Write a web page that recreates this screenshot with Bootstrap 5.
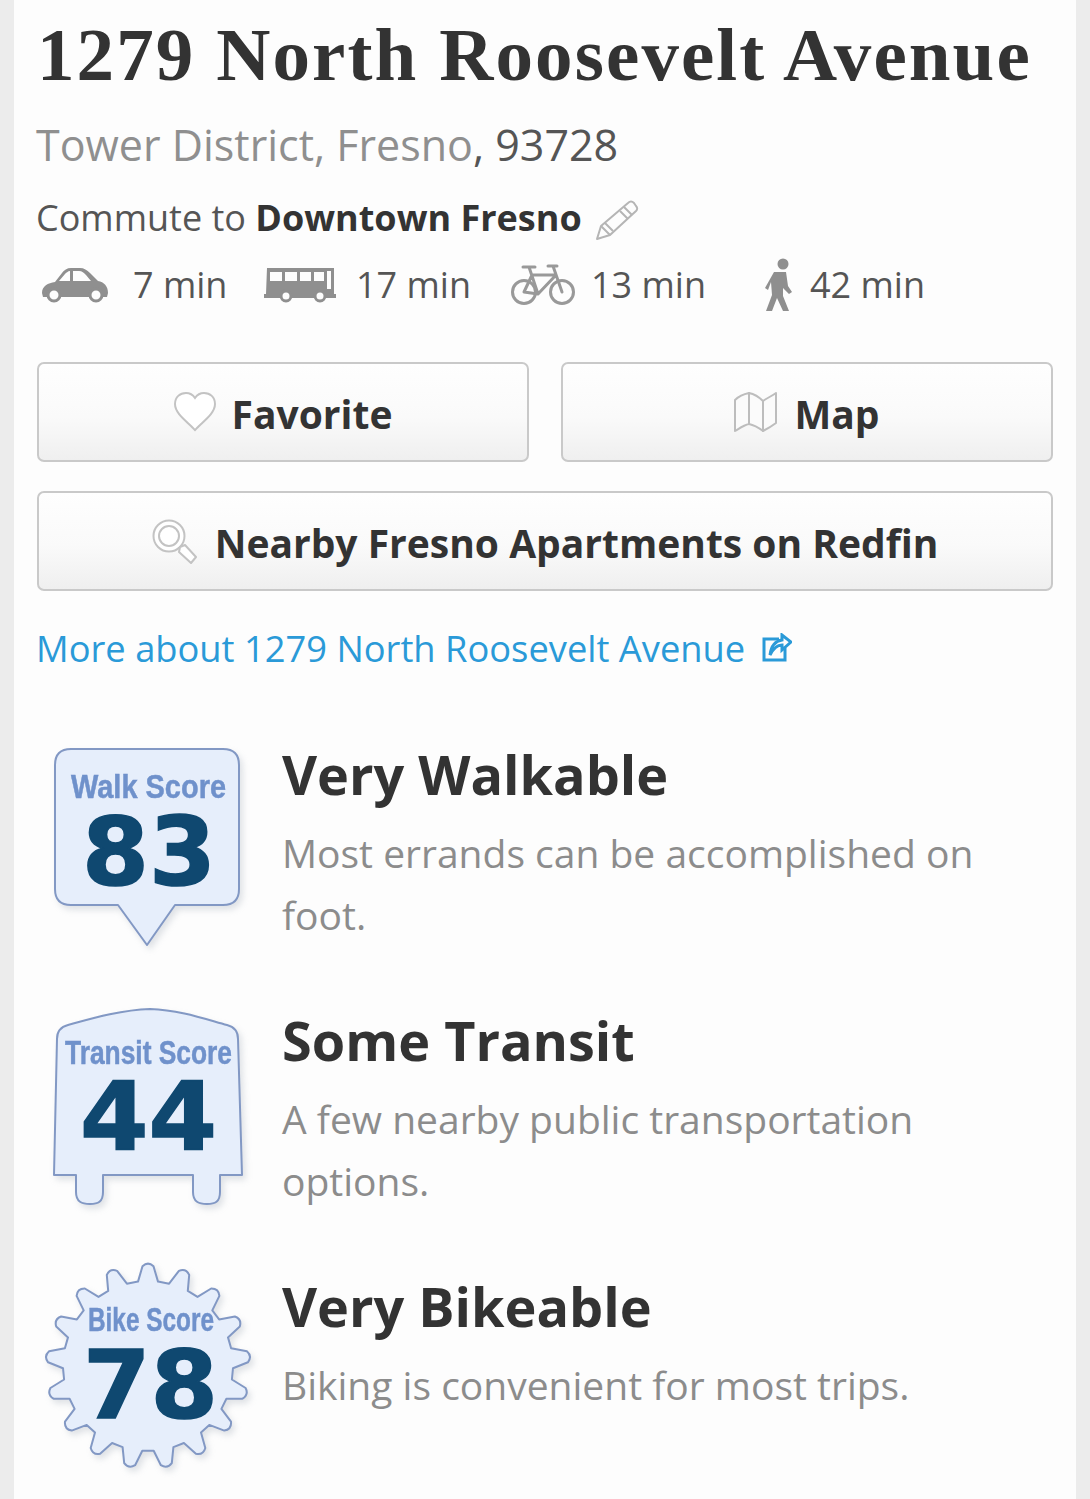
<!DOCTYPE html>
<html lang="en">
<head>
<meta charset="UTF-8">
<title>1279 North Roosevelt Avenue</title>
<link href="https://cdn.jsdelivr.net/npm/bootstrap@5.3.0/dist/css/bootstrap.min.css" rel="stylesheet">
<style>
body { background: #ececec; font-family: "Open Sans", sans-serif; color: #333; overflow: hidden; }
.sheet { margin: 0 14px 0 14px; width: 1062px; height: 1499px; background: #fdfdfd; padding: 0 23px; }
.addr-title { font-family: "Liberation Serif", serif; font-weight: 700; font-size: 75px; letter-spacing: 2.1px; line-height: 80px; margin: 0; padding-top: 15px; color: #333; white-space: nowrap; }
.addr-sub { font-size: 43px; line-height: 58px; font-weight: 400; color: #8f8f8f; margin: 21px 0 0 -1px; }
.addr-sub span { color: #555; }
.commute { font-size: 36px; line-height: 46px; font-weight: 400; color: #555; margin: 21px 0 0 -1px; white-space: nowrap; }
.commute b { color: #333; font-weight: 700; }
.times { display: grid; grid-template-columns: 227px 247px 254px auto; margin-top: 16px; height: 54px; font-size: 36px; font-weight: 400; color: #555; }
.time-cell { display: flex; align-items: center; height: 54px; }
.gap-car { gap: 25px; padding-left: 5px; }
.gap-bus { gap: 20px; }
.gap-bike { gap: 16px; }
.gap-walk { gap: 18px; }
.btn-row { display: grid; grid-template-columns: 492px 492px; gap: 29px 32px; margin-top: 50px; }
.btn-page { display: flex; align-items: center; justify-content: center; gap: 16px; height: 100px; font-size: 39px; font-weight: 700; color: #333; text-decoration: none; border: 2px solid #c9c9c9; border-radius: 7px; background: linear-gradient(#fefefe, #fafafa 55%, #efefef); padding: 0; }
.btn-page span { padding-top: 4px; }
.btn-wide { grid-column: 1 / span 2; gap: 18px; }
.more-link { display: flex; align-items: center; gap: 17px; margin-top: 33px; margin-left: -1px; font-size: 36.3px; line-height: 48px; font-weight: 400; color: #2a9ad8; text-decoration: none; }
.score-row { display: flex; height: 202px; margin-top: 64px; }
.score-row.first-score { margin-top: 72px; }
.score-art { flex: 0 0 252px; margin-left: -7px; filter: drop-shadow(3px 4px 3px rgba(120,130,150,.22)); }
.score-art svg { display: block; }
.art-walk { margin-top: -14px; }
.art-transit { margin-top: -15px; }
.art-bike { margin-top: -25px; }
.score-head { font-size: 54px; line-height: 60px; font-weight: 700; color: #333; margin: 0; }
.score-text { font-size: 39px; line-height: 62px; font-weight: 400; color: #8c8c8c; margin: 18px 0 0; }
.shape { fill: #e6eefb; stroke: #8298c4; stroke-width: 2; stroke-linejoin: round; }
.lbl { font-family: "Liberation Sans", sans-serif; font-weight: 700; fill: #6f91cb; stroke: #6f91cb; stroke-width: .5; font-size: 33px; }
.num { font-family: "DejaVu Sans", sans-serif; font-weight: 700; fill: #0f4870; stroke: #0f4870; stroke-width: 1.5; font-size: 95px; }
</style>
</head>
<body>
<div class="sheet">
    <h1 class="addr-title">1279 North Roosevelt Avenue</h1>
    <p class="addr-sub">Tower District, Fresno<span>, 93728</span></p>
    <p class="commute">Commute to <b>Downtown Fresno</b>
        <svg width="44" height="42" viewBox="0 0 44 42" class="align-middle ms-1" fill="none" stroke="#b5b5b5" stroke-width="2" stroke-linejoin="round"><path d="M2 39 L6 26 L33 3 C35 1 37 1 39 3 L41 6 C43 8 42 10 41 11 L15 35 Z"/><path d="M6 26 L15 35 M10 23 L18 31 M29 7 L37 15 M25 11 L33 19"/></svg>
    </p>

    <div class="times">
        <div class="time-cell gap-car">
            <svg width="66" height="36" viewBox="0 0 66 36"><path fill="#8f8f8f" d="M0 26 C0 19 6 16 13 15 L20 6 C22 3 25 1 29 1 L38 1 C42 1 45 3 48 6 L56 14 C62 15 66 19 66 26 L65 30 L1 30 Z"/><path fill="#fdfdfd" d="M17 14 L23 7 C24 6 26 4 28 4 L28 14 Z M31 4 L37 4 C40 4 42 6 44 8 L49 14 L31 14 Z"/><circle cx="12" cy="28" r="6" fill="#fdfdfd" stroke="#8f8f8f" stroke-width="3"/><circle cx="54" cy="28" r="6" fill="#fdfdfd" stroke="#8f8f8f" stroke-width="3"/></svg>
            <span>7 min</span>
        </div>
        <div class="time-cell gap-bus">
            <svg width="72" height="36" viewBox="0 0 72 36"><path fill="#8f8f8f" d="M3 1 L70 1 L70 27 L72 27 L72 31 L0 31 L0 27 L2 27 Z"/><path fill="#fdfdfd" d="M6 5 L18 5 L18 14 L6 14 Z M21 5 L33 5 L33 14 L21 14 Z M36 5 L47 5 L47 14 L36 14 Z M50 5 L60 5 L60 14 L50 14 Z M63 4 L67 4 L67 22 L63 22 Z"/><circle cx="22" cy="29" r="5" fill="#fdfdfd" stroke="#8f8f8f" stroke-width="3"/><circle cx="56" cy="29" r="5" fill="#fdfdfd" stroke="#8f8f8f" stroke-width="3"/></svg>
            <span>17 min</span>
        </div>
        <div class="time-cell gap-bike">
            <svg width="64" height="42" viewBox="0 0 64 42" fill="none" stroke="#999" stroke-width="3" stroke-linejoin="round" stroke-linecap="round"><circle cx="13" cy="28" r="11.5"/><circle cx="51" cy="28" r="11.5"/><path d="M13 28 L21 11 L45 11 L27 30 L13 28 M27 30 L18 3 M12 3 L24 3 M42 2 L51 28 M37 2 L46 2"/></svg>
            <span>13 min</span>
        </div>
        <div class="time-cell gap-walk">
            <svg width="27" height="54" viewBox="0 0 27 54" fill="#8f8f8f"><circle cx="18" cy="6" r="5.5"/><path d="M9 14 L21 14 L23 28 L27 34 L24 36 L18 30 L18 38 L24 53 L18 53 L12 40 L7 53 L1 53 L7 37 L6 24 L3 32 L0 30 Z"/></svg>
            <span>42 min</span>
        </div>
    </div>

    <div class="btn-row">
        <a class="btn-page" role="button">
            <svg width="42" height="40" viewBox="0 0 42 40" fill="#fff" stroke="#c3c3c3" stroke-width="2"><path d="M21 38 C14 30 1 22 1 12 C1 5 6 1 12 1 C16 1 19 3 21 6 C23 3 26 1 30 1 C36 1 41 5 41 12 C41 22 28 30 21 38 Z"/></svg>
            <span>Favorite</span>
        </a>
        <a class="btn-page" role="button">
            <svg width="44" height="41" viewBox="0 0 44 41" fill="#fbfbfb" stroke="#bdbdbd" stroke-width="2" stroke-linejoin="round"><path d="M1 8 C6 3 10 2 15 1 L15 32 C10 33 6 36 1 39 Z"/><path d="M15 1 C20 2 25 5 29 9 L29 39 C25 36 20 33 15 32 Z"/><path d="M29 9 C33 6 38 4 42 1 L42 31 C38 34 33 37 29 39 Z"/></svg>
            <span>Map</span>
        </a>
        <a class="btn-page btn-wide" role="button">
            <svg width="45" height="45" viewBox="0 0 45 45" fill="none" stroke="#c3c3c3" stroke-width="2"><circle cx="17" cy="17" r="15.5" fill="#fff"/><circle cx="17" cy="17" r="10"/><path d="M28 28 L33 26 L44 38 L39 44 L27 33 Z" fill="#fff" stroke-linejoin="round"/></svg>
            <span>Nearby Fresno Apartments on Redfin</span>
        </a>
    </div>

    <a class="more-link" href="#">
        <span>More about 1279 North Roosevelt Avenue</span>
        <svg width="30" height="30" viewBox="0 0 30 30" fill="none" stroke="#2a9ad8" stroke-width="3"><path d="M17 6 L2 6 L2 27 L23 27 L23 15"/><path d="M8 22 C9 14 13 8 20 7 L20 2 L29 9 L20 17 L20 12 C15 12 11 16 8 22 Z" fill="#fdfdfd"/></svg>
    </a>

    <div class="score-row first-score">
        <div class="score-art">
            <svg class="art-walk" width="240" height="230" viewBox="0 0 240 230"><path class="shape" d="M41 19 L193 19 Q209 19 209 35 L209 159 Q209 175 193 175 L145 175 L117 215 L88 175 L41 175 Q25 175 25 159 L25 35 Q25 19 41 19 Z"/><text class="lbl" x="41" y="68" textLength="155" lengthAdjust="spacingAndGlyphs">Walk Score</text><text class="num" x="52" y="155" textLength="134" lengthAdjust="spacingAndGlyphs">83</text></svg>
        </div>
        <div class="flex-grow-1">
            <h2 class="score-head">Very Walkable</h2>
            <p class="score-text">Most errands can be accomplished on foot.</p>
        </div>
    </div>

    <div class="score-row">
        <div class="score-art">
            <svg class="art-transit" width="240" height="230" viewBox="0 0 240 230"><path class="shape" d="M120 14 C90 15 60 24 38 30 C30 32 27 37 27 44 L24 180 L46 180 L46 197 C46 207 52 209 60 209 C68 209 73 207 73 197 L73 180 L163 180 L163 197 C163 207 169 209 177 209 C185 209 190 207 190 197 L190 180 L212 180 L208 44 C208 37 205 32 197 30 C175 24 150 15 120 14 Z"/><text class="lbl" x="35" y="69" textLength="167" lengthAdjust="spacingAndGlyphs">Transit Score</text><text class="num" x="50" y="155" textLength="137" lengthAdjust="spacingAndGlyphs">44</text></svg>
        </div>
        <div class="flex-grow-1">
            <h2 class="score-head">Some Transit</h2>
            <p class="score-text">A few nearby public transportation options.</p>
        </div>
    </div>

    <div class="score-row">
        <div class="score-art">
            <svg class="art-bike" width="240" height="230" viewBox="0 0 240 230"><path id="gear" class="shape" d=""/><text class="lbl" x="58" y="80" textLength="126" lengthAdjust="spacingAndGlyphs">Bike Score</text><text class="num" x="53" y="167" textLength="135" lengthAdjust="spacingAndGlyphs">78</text></svg>
        </div>
        <div class="flex-grow-1">
            <h2 class="score-head">Very Bikeable</h2>
            <p class="score-text">Biking is convenient for most trips.</p>
        </div>
    </div>
</div>

<script>
    // gear outline for the bike score badge
    const teeth = 17, cx = 118, cy = 115, outer = 103, root = 85;
    const step = Math.PI * 2 / teeth;
    const pt = (r, t) => (cx + r * Math.cos(t)).toFixed(1) + ' ' + (cy + r * Math.sin(t)).toFixed(1);
    let d = '';
    for (let i = 0; i < teeth; i++) {
        const a = i * step - Math.PI / 2;
        d += (i === 0 ? 'M' : 'L') + pt(root, a - step * 0.32);
        d += ' L' + pt(outer - 3, a - step * 0.15);
        d += ' Q' + pt(outer + 2, a) + ' ' + pt(outer - 3, a + step * 0.15);
        d += ' L' + pt(root, a + step * 0.32) + ' ';
    }
    document.getElementById('gear').setAttribute('d', d + 'Z');
</script>
<script src="https://cdn.jsdelivr.net/npm/bootstrap@5.3.0/dist/js/bootstrap.bundle.min.js"></script>
</body>
</html>
